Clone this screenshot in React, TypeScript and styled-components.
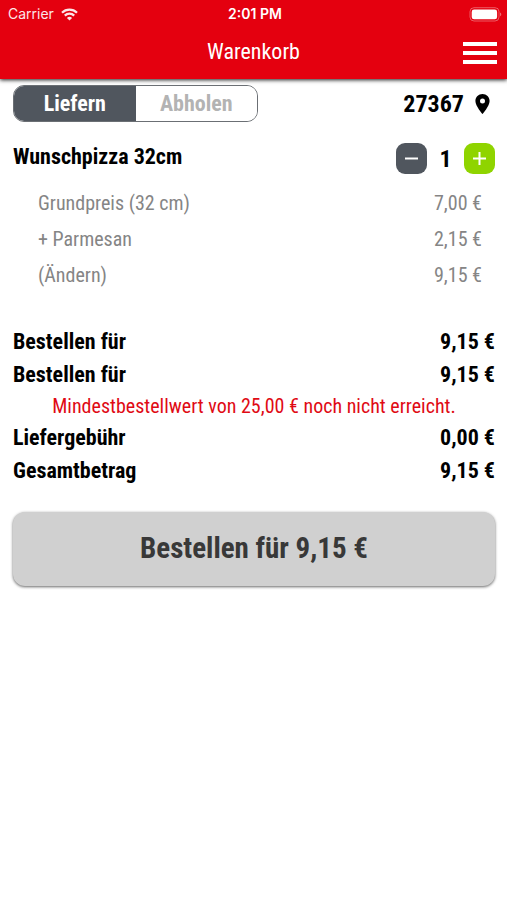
import React, { useState } from 'react';
import styled, { createGlobalStyle } from 'styled-components';

const GlobalStyle = createGlobalStyle`
  *, *::before, *::after { box-sizing: border-box; }
  body {
    margin: 0;
    background: #fff;
    color: #000;
    font-family: "Roboto Condensed", Roboto, sans-serif;
  }
  button { font: inherit; color: inherit; border: 0; padding: 0; background: none; cursor: pointer; }
`;

const Header = styled.header`
  background: #e4000f;
  color: #fff;
  box-shadow: 0 1px 4px rgba(0, 0, 0, 0.9);
`;

const StatusBar = styled.div`
  display: grid;
  grid-template-columns: 1fr auto 1fr;
  align-items: center;
  height: 28px;
  padding: 0 5px 0 8px;
  font-family: Inter, sans-serif;
  font-size: 14px;
  line-height: 16px;
`;

const Carrier = styled.div`
  display: flex;
  align-items: center;
  gap: 7px;
  opacity: 0.9;
`;

const Clock = styled.time`
  font-weight: 600;
`;

const Battery = styled.svg`
  justify-self: end;
`;

const TitleBar = styled.div`
  display: grid;
  grid-template-columns: 1fr auto 1fr;
  align-items: center;
  height: 51px;
  padding: 0 10px;
`;

const Title = styled.h1`
  grid-column: 2;
  margin: 0;
  padding-bottom: 4px;
  font-size: 22px;
  line-height: 26px;
  font-weight: 400;
`;

const MenuButton = styled.button`
  display: flex;
  justify-self: end;
`;

const Content = styled.main`
  padding: 6px 12px 24px 13px;
`;

const Row = styled.div`
  display: flex;
  align-items: center;
  justify-content: space-between;
`;

const Switch = styled.div`
  display: flex;
  width: 245px;
  height: 37px;
  border: 1px solid #6b6f74;
  border-radius: 11px;
  overflow: hidden;
`;

const SwitchOption = styled.button<{ $active: boolean }>`
  flex: 1;
  font-size: 22px;
  line-height: 26px;
  font-weight: 700;
  color: ${(p) => (p.$active ? '#fff' : '#b3b3b3')};
  background: ${(p) => (p.$active ? '#50565e' : '#fff')};
`;

const Location = styled.button`
  display: flex;
  align-items: center;
  gap: 10px;
  padding-right: 4px;
  font-size: 24px;
  line-height: 28px;
  font-weight: 700;
`;

const ItemRow = styled(Row)`
  margin-top: 21px;
`;

const ItemName = styled.h2`
  margin: 0 0 4px;
  font-size: 22px;
  line-height: 26px;
  font-weight: 700;
`;

const Stepper = styled.div`
  display: flex;
  align-items: center;
`;

const StepButton = styled.button<{ $color: string }>`
  display: flex;
  align-items: center;
  justify-content: center;
  width: 31px;
  height: 31px;
  border-radius: 9px;
  background: ${(p) => p.$color};
`;

const Quantity = styled.output`
  width: 37px;
  text-align: center;
  font-size: 24px;
  line-height: 28px;
  font-weight: 700;
`;

const Details = styled.div`
  margin-top: 11px;
  padding: 0 13px 0 25px;
`;

const DetailRow = styled(Row)`
  height: 36px;
  font-size: 20px;
  line-height: 24px;
  color: #858585;
`;

const Totals = styled.div`
  margin-top: 32px;
`;

const TotalRow = styled(Row)`
  height: 33px;
  font-size: 22px;
  line-height: 26px;
  font-weight: 700;
`;

const Notice = styled.p`
  margin: 0;
  text-align: center;
  font-size: 20px;
  line-height: 30px;
  color: #e00a14;
`;

const OrderButton = styled.button`
  width: 100%;
  height: 74px;
  margin-top: 25px;
  padding-bottom: 2px;
  border-radius: 12px;
  background: #d0d0d0;
  box-shadow: 0 1px 3px rgba(0, 0, 0, 0.6);
  font-size: 29px;
  line-height: 36px;
  font-weight: 700;
  color: #383838;
`;

const details = [
  { label: 'Grundpreis (32 cm)', price: '7,00 €' },
  { label: '+ Parmesan', price: '2,15 €' },
];

const WifiIcon = () => (
  <svg width="17" height="13" viewBox="0 0 17 13" fill="none" stroke="#fff" strokeWidth="2.3" aria-hidden="true">
    <path d="M1 4.7a10.7 10.7 0 0 1 15 0" />
    <path d="M3.8 7.6a6.7 6.7 0 0 1 9.4 0" />
    <path d="M8.5 12.6 5.9 9.9a3.8 3.8 0 0 1 5.2 0z" fill="#fff" stroke="none" />
  </svg>
);

const BatteryIcon = () => (
  <Battery width="33" height="15" viewBox="0 0 33 15" aria-label="Akku voll" role="img">
    <rect x="1" y="0.7" width="29" height="13.3" rx="4" fill="none" stroke="#fff" strokeOpacity="0.35" />
    <rect x="2.7" y="2.5" width="25.4" height="9.8" rx="2.4" fill="#fff" />
    <path d="M31.2 5.4c1.4.7 1.4 3.2 0 3.9z" fill="#fff" fillOpacity="0.5" />
  </Battery>
);

const PinIcon = () => (
  <svg width="17" height="22" viewBox="0 0 17 22" aria-hidden="true">
    <path
      fillRule="evenodd"
      fill="#000"
      d="M8.5 1C4.5 1 1.4 4.1 1.4 8c0 5.1 7.1 13 7.1 13s7.1-7.9 7.1-13c0-3.9-3.1-7-7.1-7zm0 4.5a2.5 2.5 0 1 1 0 5 2.5 2.5 0 0 1 0-5z"
    />
  </svg>
);

export default function App() {
  const [mode, setMode] = useState('Liefern');
  const [quantity, setQuantity] = useState(1);

  return (
    <>
      <GlobalStyle />
      <Header>
        <StatusBar>
          <Carrier>
            Carrier
            <WifiIcon />
          </Carrier>
          <Clock>2:01 PM</Clock>
          <BatteryIcon />
        </StatusBar>
        <TitleBar>
          <Title>Warenkorb</Title>
          <MenuButton aria-label="Menü">
            <svg width="34" height="24" viewBox="0 0 34 24" fill="#fff" aria-hidden="true">
              <path d="M0 0h34v4H0zM0 9h34v4H0zM0 18h34v4H0z" />
            </svg>
          </MenuButton>
        </TitleBar>
      </Header>
      <Content>
        <Row>
          <Switch role="group" aria-label="Bestellart">
            {['Liefern', 'Abholen'].map((option) => (
              <SwitchOption
                key={option}
                $active={mode === option}
                aria-pressed={mode === option}
                onClick={() => setMode(option)}
              >
                {option}
              </SwitchOption>
            ))}
          </Switch>
          <Location>
            27367
            <PinIcon />
          </Location>
        </Row>
        <ItemRow>
          <ItemName>Wunschpizza 32cm</ItemName>
          <Stepper>
            <StepButton $color="#50565e" aria-label="Weniger" onClick={() => setQuantity(Math.max(1, quantity - 1))}>
              <svg width="15" height="15" viewBox="0 0 15 15" stroke="#fff" strokeWidth="2" aria-hidden="true">
                <path d="M1 7.5h13" />
              </svg>
            </StepButton>
            <Quantity>{quantity}</Quantity>
            <StepButton $color="#8fd400" aria-label="Mehr" onClick={() => setQuantity(quantity + 1)}>
              <svg width="15" height="15" viewBox="0 0 15 15" stroke="#fff" strokeWidth="2" aria-hidden="true">
                <path d="M1 7.5h13M7.5 1v13" />
              </svg>
            </StepButton>
          </Stepper>
        </ItemRow>
        <Details>
          {details.map((detail) => (
            <DetailRow key={detail.label}>
              <span>{detail.label}</span>
              <span>{detail.price}</span>
            </DetailRow>
          ))}
          <DetailRow>
            <button>(Ändern)</button>
            <span>9,15 €</span>
          </DetailRow>
        </Details>
        <Totals>
          <TotalRow>
            <span>Bestellen für</span>
            <span>9,15 €</span>
          </TotalRow>
          <TotalRow>
            <span>Bestellen für</span>
            <span>9,15 €</span>
          </TotalRow>
          <Notice>Mindestbestellwert von 25,00 € noch nicht erreicht.</Notice>
          <TotalRow>
            <span>Liefergebühr</span>
            <span>0,00 €</span>
          </TotalRow>
          <TotalRow>
            <span>Gesamtbetrag</span>
            <span>9,15 €</span>
          </TotalRow>
        </Totals>
        <OrderButton>Bestellen für 9,15 €</OrderButton>
      </Content>
    </>
  );
}
